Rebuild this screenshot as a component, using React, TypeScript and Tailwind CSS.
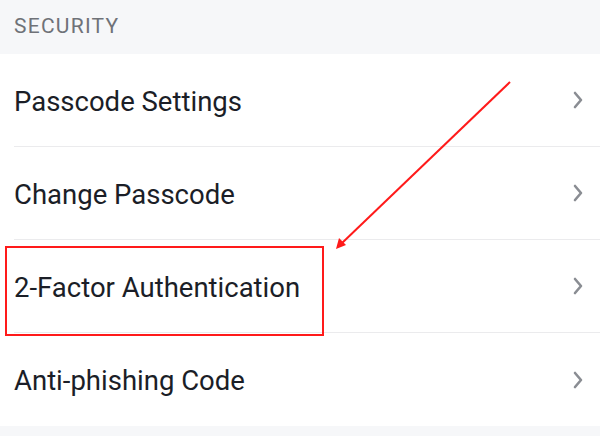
import React from 'react';

const items = ['Passcode Settings', 'Change Passcode', '2-Factor Authentication', 'Anti-phishing Code'];

const Chevron = () => (
  <svg width="12" height="18" viewBox="0 0 12 18" fill="none" className="shrink-0">
    <path d="M3 2 L9 9 L3 16" stroke="#8a8d93" strokeWidth="2.6" strokeLinecap="round" strokeLinejoin="round" />
  </svg>
);

export default function App() {
  return (
    <div className="relative w-[600px] h-[436px] overflow-hidden bg-[#f6f7f9]" style={{ fontFamily: 'Roboto, "Noto Sans", sans-serif' }}>
      <div className="h-[54px] flex items-center px-[14px]">
        <span className="text-[21px] tracking-[0.06em] text-[#6f7278]">SECURITY</span>
      </div>

      <div className="bg-white">
        {items.map((label, i) => (
          <div key={label} className="pl-[14px]">
            <div className={`h-[93px] flex items-center justify-between pr-[16px] ${i < items.length - 1 ? 'border-b border-[#ebebed]' : ''}`}>
              <span className="pt-[3px] text-[27.5px] text-[#1b1e27]">{label}</span>
              <Chevron />
            </div>
          </div>
        ))}
      </div>

      {/* annotation overlay */}
      <div className="absolute left-[5px] top-[246px] w-[319px] h-[90px] border-2 border-[#ff1a1a]" />
      <svg className="absolute inset-0 pointer-events-none" width="600" height="436">
        <line x1="510" y1="82" x2="341" y2="244" stroke="#ff1a1a" strokeWidth="2" />
        <path d="M336 249 L339 238 L346 245 Z" fill="#ff1a1a" />
      </svg>
    </div>
  );
}
